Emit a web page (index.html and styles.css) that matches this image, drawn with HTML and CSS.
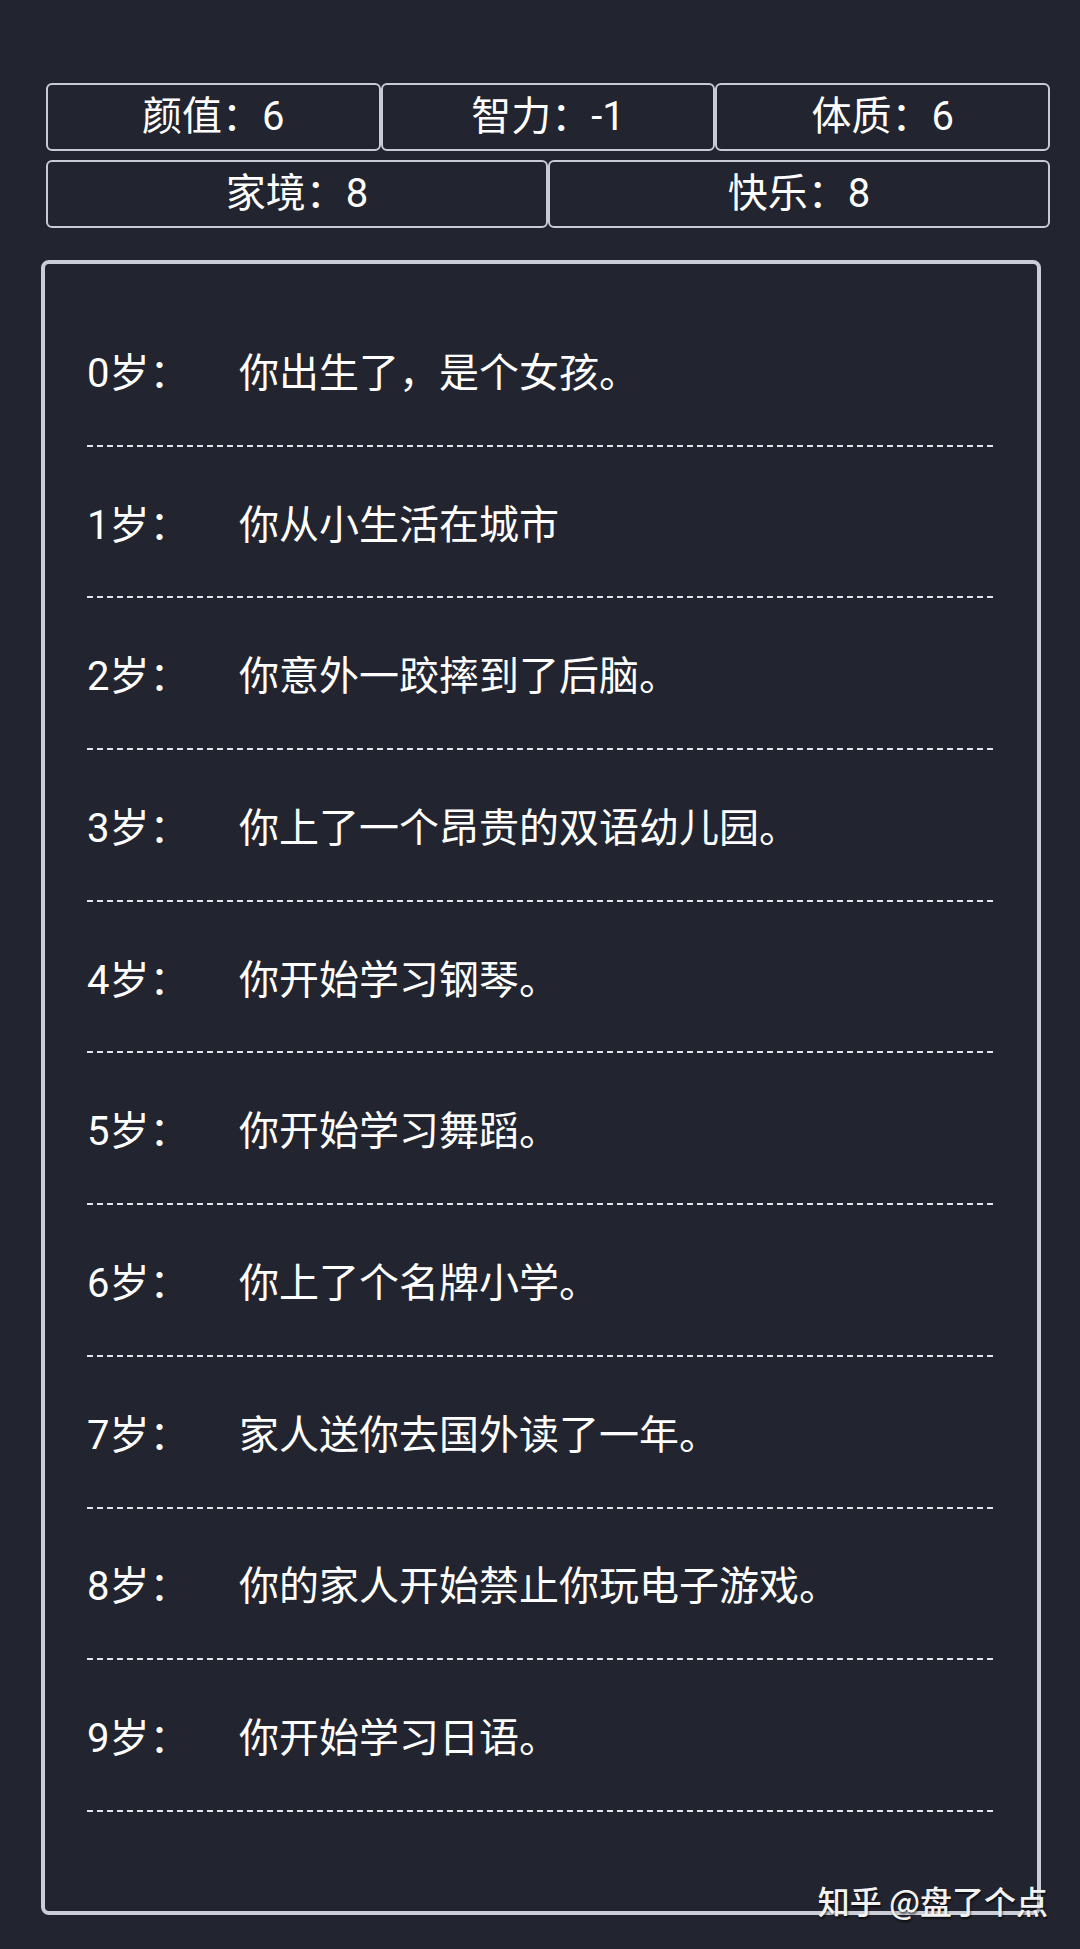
FILE: index.html
```html
<!DOCTYPE html>
<html>
<head>
<meta charset="utf-8" />
<title>人生重开</title>
	<link rel="stylesheet" href="styles.css">
</head>

<body>
	<div class="stats">
		<div class="stats-row">
			<div class="stat">颜值：6</div>
			<div class="stat">智力：-1</div>
			<div class="stat">体质：6</div>
		</div>
		<div class="stats-row">
			<div class="stat">家境：8</div>
			<div class="stat">快乐：8</div>
		</div>
	</div>

	<div class="story">
		<div class="event"><span class="age">0岁：</span><span class="text">你出生了，是个女孩。</span></div>
		<div class="event"><span class="age">1岁：</span><span class="text">你从小生活在城市</span></div>
		<div class="event"><span class="age">2岁：</span><span class="text">你意外一跤摔到了后脑。</span></div>
		<div class="event"><span class="age">3岁：</span><span class="text">你上了一个昂贵的双语幼儿园。</span></div>
		<div class="event"><span class="age">4岁：</span><span class="text">你开始学习钢琴。</span></div>
		<div class="event"><span class="age">5岁：</span><span class="text">你开始学习舞蹈。</span></div>
		<div class="event"><span class="age">6岁：</span><span class="text">你上了个名牌小学。</span></div>
		<div class="event"><span class="age">7岁：</span><span class="text">家人送你去国外读了一年。</span></div>
		<div class="event"><span class="age">8岁：</span><span class="text">你的家人开始禁止你玩电子游戏。</span></div>
		<div class="event"><span class="age">9岁：</span><span class="text">你开始学习日语。</span></div>
	</div>

	<div class="watermark">知乎 @盘了个点</div>
</body>
</html>
```

FILE: styles.css
```css
    body{
	    margin:0; height:1949px; position:relative; overflow:hidden;
	    background-color:#22252f; color:#fff;
	    font: normal 40px Roboto, "Noto Sans CJK SC", sans-serif;
    }
    .stats{
	    display:flex; flex-direction:column; gap:9px;
	    padding-top:83px;
	    margin-left:46px; width:1004px;
    }
    .stats-row{
	    display:flex;
    }
    .stat{
	    flex:1; height:68px;
	    box-sizing:border-box;
	    border:2px solid #c8cbd3; border-radius:6px;
	    display:flex; align-items:center; justify-content:center;
	    line-height:1;
    }
    .story{
	    margin-top:32px; margin-left:41px;
	    width:1000px; height:1655px;
	    box-sizing:border-box;
	    border:4px solid #cbced6; border-radius:8px;
	    padding:31px 41px 0 42px;
    }
    .event{
	    display:flex; align-items:center;
	    height:151.7px; box-sizing:border-box; padding-bottom:2px;
	    background: repeating-linear-gradient(to right, #e3e5ea 0 6px, transparent 6px 10px) left bottom / 100% 2px no-repeat;
    }
    .age{
	    width:152px; flex:none;
    }
	.watermark {
		position:absolute; right:32px; top:1884px;
		font: 500 32px "Noto Sans CJK SC", sans-serif; line-height:32px;
		color:#f2f2f2;
		text-shadow: 1px 2px 2px rgba(0,0,0,.6);
	}
```
